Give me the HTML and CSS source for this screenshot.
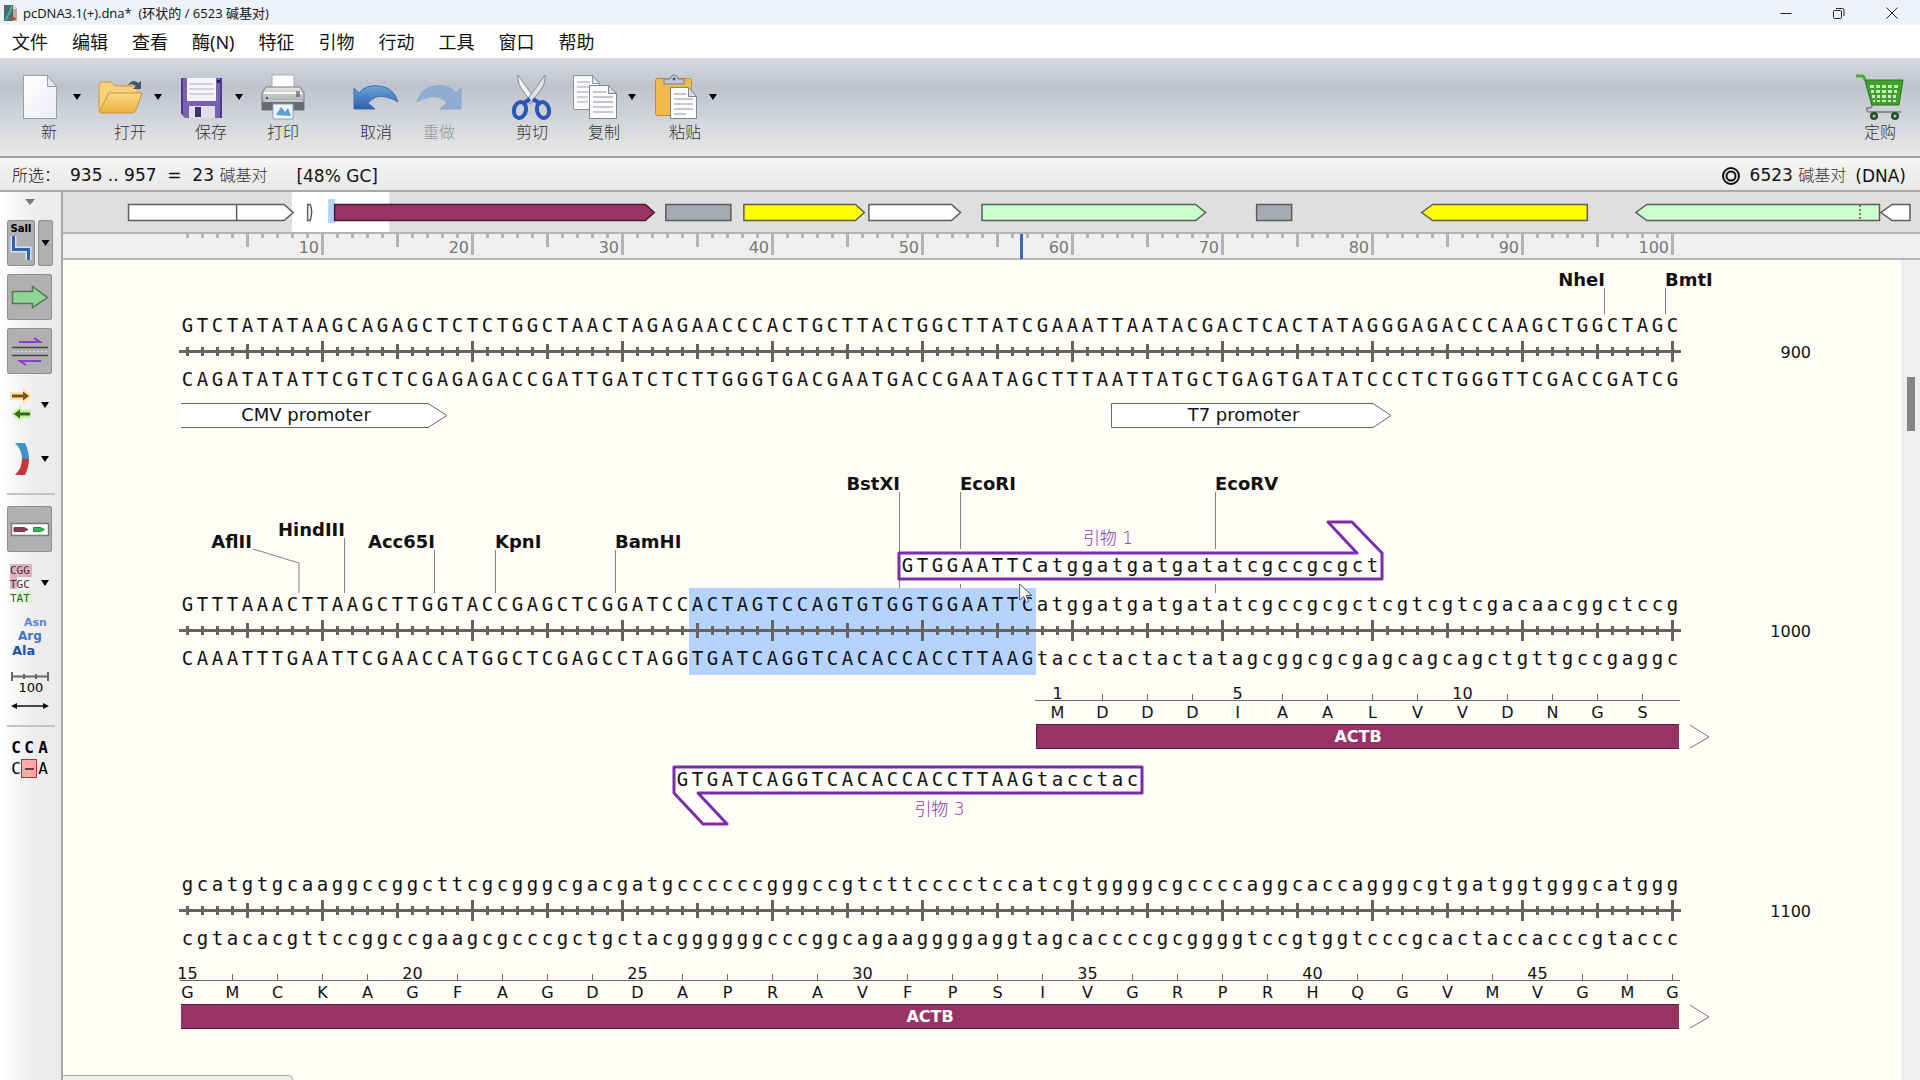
FILE: index.html
```html
<!DOCTYPE html>
<html lang="zh-CN">
<head>
<meta charset="utf-8">
<meta name="viewport" content="width=device-width, initial-scale=1">
<title>pcDNA3.1(+).dna* (环状的 / 6523 碱基对)</title>
<link rel="stylesheet" href="styles.css">
</head>
<body>
<div class="app">

  <header class="titlebar">
    <svg class="file-icon" viewBox="0 0 15 18" aria-hidden="true">
      <path d="M1 1h9l4 4v12H1z" fill="#4a6c6b"/>
      <path d="M10 1l4 4h-4z" fill="#e8d9c8"/>
      <path d="M10 5h4v12h-4z" fill="#c3aa94"/>
      <path d="M3 16C4 10 9 9 8 2" stroke="#3fb3a6" stroke-width="2" fill="none"/>
      <path d="M7 14l5-1 1 3H8z" fill="#a5562f"/>
    </svg>
    <h1 class="title">pcDNA3.1(+).dna*&nbsp; (环状的 / 6523 碱基对)</h1>
    <div class="window-controls">
      <button class="window-button" aria-label="最小化"><svg viewBox="0 0 14 14"><path d="M1.500 7.500h11"/></svg></button>
      <button class="window-button" aria-label="还原"><svg viewBox="0 0 14 14"><rect x="1.500" y="4.500" width="8" height="8" rx="1"/><path d="M4 2.500h6.500a1.500 1.500 0 0 1 1.500 1.500V10"/></svg></button>
      <button class="window-button" aria-label="关闭"><svg viewBox="0 0 14 14"><path d="M1.500 1.500l11 11M12.500 1.500l-11 11"/></svg></button>
    </div>
  </header>

  <nav class="menubar">
    <button>文件</button><button>编辑</button><button>查看</button><button>酶(N)</button><button>特征</button><button>引物</button><button>行动</button><button>工具</button><button>窗口</button><button>帮助</button>
  </nav>

  <div class="toolbar">
    <button class="tool">
      <span class="tool-face"><svg class="tool-icon" viewBox="0 0 56 48"><defs><linearGradient id="paper" x1="0" y1="0" x2="1" y2="1"><stop offset="0" stop-color="#fff"/><stop offset="1" stop-color="#eceef3"/></linearGradient></defs><path d="M11.500 2.500h24l9 11v32h-33z" fill="url(#paper)" stroke="#9a9fa8"/><path d="M35.500 2.500v11h9z" fill="#e3e6ec" stroke="#9a9fa8"/></svg><span class="caret"></span></span>
      <span class="tool-label">新</span>
    </button>
    <button class="tool">
      <span class="tool-face"><svg class="tool-icon" viewBox="0 0 56 48"><defs><linearGradient id="folder" x1="0" y1="0" x2="0" y2="1"><stop offset="0" stop-color="#fbd983"/><stop offset="1" stop-color="#e9b23f"/></linearGradient></defs><path d="M6 12q0-3 3-3h9l4 4h19q3 0 3 3v18L9 40q-3 0-3-3z" fill="#f6d27c" stroke="#d09a35"/><path d="M16 20h33L43 37q-1 3-4 3H8q-2 0-1-3z" fill="url(#folder)" stroke="#cc9430"/><path d="M35 12q5-7 10-2l3-2v8h-8l3-3q-3-3-8-1z" fill="#42536c"/></svg><span class="caret"></span></span>
      <span class="tool-label">打开</span>
    </button>
    <button class="tool">
      <span class="tool-face"><svg class="tool-icon" viewBox="0 0 56 48"><path d="M7 5h41v40H11l-4-4z" fill="#7b5fb0"/><path d="M7 5h2v36l-2-1zM46 5h2v40h-2z" fill="#4f3b86"/><rect x="13" y="5" width="29" height="23" fill="#f4f5f7"/><path d="M15 11h25M15 16h25M15 21h25" stroke="#a9adb5"/><rect x="43" y="7" width="3" height="3" fill="#2d2450"/><rect x="15" y="33" width="26" height="12" rx="1" fill="#dfe0e8"/><rect x="21" y="34" width="6" height="10" fill="#413073"/></svg><span class="caret"></span></span>
      <span class="tool-label">保存</span>
    </button>
    <button class="tool">
      <span class="tool-face"><svg class="tool-icon" viewBox="0 0 56 48"><defs><linearGradient id="printer" x1="0" y1="0" x2="0" y2="1"><stop offset="0" stop-color="#e4e4e4"/><stop offset="1" stop-color="#8d8f93"/></linearGradient></defs><path d="M17 2h22v16H17z" fill="#fff" stroke="#a6abb5"/><path d="M11 14h34l4 6v17H7V20z" fill="url(#printer)" stroke="#77797d"/><path d="M9 20h38" stroke="#f6f6f6" stroke-width="2"/><path d="M7 29h42v8H7z" fill="#686b70"/><path d="M9 29h38v-2H9z" fill="#c4c5c8"/><circle cx="12" cy="25" r="1" fill="#222"/><path d="M44 18v6M42 18v6" stroke="#333"/><path d="M18 31h20v15H18z" fill="#eef5fc" stroke="#8aa2bf"/><path d="M21 42l5-8 4 5 3-4 3 8z" fill="#5a9fd8"/></svg></span>
      <span class="tool-label">打印</span>
    </button>
    <span class="tool-gap"></span>
    <button class="tool">
      <span class="tool-face"><svg class="tool-icon" viewBox="0 0 56 48"><defs><linearGradient id="arrow" x1="0" y1="0" x2="0" y2="1"><stop offset="0" stop-color="#6fa3dc"/><stop offset="1" stop-color="#2a62ad"/></linearGradient></defs><path d="M6 15v21h21l-7-6q8-9 18-6 8 2 12 5Q46 15 32 13 18 11 11 20z" fill="url(#arrow)" stroke="#3f70b0"/></svg></span>
      <span class="tool-label">取消</span>
    </button>
    <button class="tool" disabled>
      <span class="tool-face"><svg class="tool-icon" viewBox="0 0 56 48"><path d="M50 15v21H29l7-6q-8-9-18-6-8 2-12 5Q10 15 24 13q14-2 21 7z" fill="#8fadd3" stroke="#8aa7cc"/></svg></span>
      <span class="tool-label">重做</span>
    </button>
    <span class="tool-gap"></span>
    <button class="tool">
      <span class="tool-face"><svg class="tool-icon" viewBox="0 0 56 48"><path d="M14 2q-1 8 5 16l9 12 3-4z" fill="#f2f3f5" stroke="#858b95"/><path d="M41 2q1 8-5 16L26 31l-3-4z" fill="#dfe2e7" stroke="#858b95"/><g fill="none" stroke="#2a56b8" stroke-width="4"><ellipse cx="16" cy="37" rx="6" ry="8" transform="rotate(14 16 37)"/><ellipse cx="39" cy="37" rx="6" ry="8" transform="rotate(-14 39 37)"/><path d="M20 30l6-4M35 30l-6-4"/></g></svg></span>
      <span class="tool-label">剪切</span>
    </button>
    <button class="tool">
      <span class="tool-face"><svg class="tool-icon" viewBox="0 0 56 48"><g fill="#fbfbfc" stroke="#8f949d"><path d="M6.500 2.500h19l7 8v26h-26z"/><path d="M25.500 2.500v8h7z" fill="#e1e4ea"/></g><path d="M10 9h13M10 14h13M10 19h13M10 24h11M10 29h11" stroke="#9da3ae"/><g fill="#fbfbfc" stroke="#7f848d"><path d="M22.500 12.500h19l8 8v25h-27z"/><path d="M41.500 12.500v8h8z" fill="#d9dde4"/></g><path d="M26 19h13M26 24h20M26 29h20M26 34h20M26 39h20" stroke="#8e949f"/></svg><span class="caret"></span></span>
      <span class="tool-label">复制</span>
    </button>
    <button class="tool">
      <span class="tool-face"><svg class="tool-icon" viewBox="0 0 56 48"><rect x="7.500" y="5.500" width="36" height="37" rx="2" fill="#f2b94c" stroke="#c68b2b"/><path d="M16 11V6h6q1-4 4-4t4 4h6v5z" fill="#c3c8d0" stroke="#777d88"/><circle cx="26" cy="6" r="1.500" fill="#50565f"/><g fill="#fbfbfc" stroke="#7f848d"><path d="M22.500 14.500h18l8 9v22h-26z"/><path d="M40.500 14.500v9h8z" fill="#d9dde4"/></g><path d="M26 21h12M26 26h19M26 31h19M26 36h19M26 41h12" stroke="#8e949f"/></svg><span class="caret"></span></span>
      <span class="tool-label">粘贴</span>
    </button>
    <button class="tool tool-end">
      <span class="tool-face"><svg class="tool-icon" viewBox="0 0 56 48"><path d="M4 3h6q2 0 3 3l7 26q0 3-3 3h-2q-1 4 3 4h31" fill="none" stroke="#8b8f94" stroke-width="2"/><path d="M4 3h6q2 0 3 4" fill="none" stroke="#4bae35" stroke-width="3"/><path d="M13 7h38l-4 25H20z" fill="#3fa02c" stroke="#2c7d1e"/><g fill="#c8ecbf"><path d="M18 12h4v3h-4zM24 12h4v3h-4zM30 12h4v3h-4zM36 12h4v3h-4zM42 12h4v3h-4zM19 17h3v3h-3zM24 17h4v3h-4zM30 17h4v3h-4zM36 17h4v3h-4zM42 17h3v3h-3zM20 22h3v3h-3zM25 22h3v3h-3zM30 22h4v3h-4zM36 22h3v3h-3zM41 22h3v3h-3zM21 27h2v2h-2zM25 27h3v2h-3zM30 27h4v2h-4zM36 27h3v2h-3zM41 27h3v2h-3z"/></g><circle cx="22" cy="43" r="4" fill="#27502a"/><circle cx="43" cy="43" r="4" fill="#27502a"/><circle cx="22" cy="43" r="1.500" fill="#b5c7b5"/><circle cx="43" cy="43" r="1.500" fill="#b5c7b5"/></svg></span>
      <span class="tool-label">定购</span>
    </button>
  </div>

  <div class="statusbar">
    <span class="status-name">所选：</span>
    <span class="status-range">935 .. 957&nbsp; =&nbsp; 23 <span class="han">碱基对</span></span>
    <span>[48% GC]</span>
    <span class="status-total">
      <svg class="ring" viewBox="0 0 20 20" aria-hidden="true"><circle cx="10" cy="10" r="8"/><circle cx="10" cy="10" r="4.500"/></svg>
      <span>6523 <span class="han">碱基对</span></span>
      <span>(DNA)</span>
    </span>
  </div>

  <div class="workspace">
    <aside class="sidebar">
      <button class="side-collapse" aria-label="折叠"><svg viewBox="0 0 10 6"><path d="M0 0h10L5 6z" fill="#777"/></svg></button>
      <div class="side-split">
        <button class="side-button pressed" aria-label="酶切位点"><svg viewBox="0 0 28 46"><text x="14" y="12" class="icon-sal">SalI</text><path d="M6.500 16v13.500h15V40" fill="none" stroke="#d5e4fb" stroke-width="6"/><path d="M6.500 16v13.500h15V40" fill="none" stroke="#3560ad" stroke-width="3"/></svg></button>
        <button class="side-button pressed" aria-label="酶选项"><span class="caret"></span></button>
      </div>
      <button class="side-button pressed" aria-label="特征"><svg viewBox="0 0 46 46"><path d="M5.500 17.500h20v-5L40.500 23.500 25.500 33.500v-4h-20z" fill="#8fd694" stroke="#587060" stroke-width="1.500"/></svg></button>
      <button class="side-button pressed" aria-label="引物"><svg viewBox="0 0 46 46"><path d="M12 14h21l-6-4" fill="none" stroke="#8b3ec9" stroke-width="2"/><path d="M5 19.500h36M5 27.500h36" stroke="#444" stroke-width="1.500"/><path d="M6 23.500h35" stroke="#d8d8d8" stroke-dasharray="2 2"/><path d="M34 33H13l6 4" fill="none" stroke="#8b3ec9" stroke-width="2"/></svg></button>
      <button class="side-button" aria-label="ORF"><svg viewBox="0 0 28 46"><path d="M3 10h13V5l9 9-9 9v-5H3z" fill="#fae2ad"/><path d="M5 12.500h11v-3l6 4.500-6 4.500v-3H5z" fill="#7c5115"/><path d="M24 28H14v-4l-10 8 10 8v-4h10z" fill="#bdf59c"/><path d="M23 30.500H13v-3L7 32l6 4.500v-3h10z" fill="#376b1d"/></svg><span class="caret"></span></button>
      <button class="side-button" aria-label="密度"><svg viewBox="0 0 28 46"><path d="M8 7h10q4 8 4 16h-7Q15 14 8 7z" fill="#3d92c8"/><path d="M22 23q0 8-4 16H8q7-7 7-16z" fill="#c5373b"/></svg><span class="caret"></span></button>
      <hr class="side-rule">
      <button class="side-button pressed" aria-label="小地图"><svg viewBox="0 0 46 46"><rect x="4.500" y="17.500" width="37" height="12" fill="#fff" stroke="#777" stroke-width="1.500"/><path d="M7 21.500h10l4 2-4 2H7z" fill="#8a3560" stroke="#6b3a56"/><path d="M26.500 21.500h7l4 2-4 2h-7z" fill="#37b954" stroke="#2d7c3d"/></svg></button>
      <button class="side-button" aria-label="颜色"><svg viewBox="0 0 28 46"><path d="M3 4h22v13H10v12H3z" fill="#dcb2c2"/><path d="M10 31h15v12H10z" fill="#d9f5d2"/><g class="icon-codon"><text x="3" y="14">CGG</text><text x="3" y="28">TGC</text><text x="3" y="42" fill="#29632a">TAT</text></g></svg><span class="caret"></span></button>
      <button class="side-button" aria-label="翻译"><svg viewBox="0 0 46 46"><g class="icon-amino"><text x="17" y="12" font-size="11" fill="#5b86cd">Asn</text><text x="11" y="26" font-size="12" fill="#4571c0">Arg</text><text x="5" y="41" font-size="13" fill="#2650a8">Ala</text></g></svg></button>
      <button class="side-button" aria-label="编号"><svg viewBox="0 0 46 46"><path d="M4 8.500h38M5 4v9M41 4v9" stroke="#666" stroke-width="2"/><path d="M17 6v5M29 6v5" stroke="#666" stroke-width="2"/><text x="24" y="24" class="icon-hundred">100</text><path d="M6 38h34" stroke="#111" stroke-width="1.500"/><path d="M4 38l6-3v6zM42 38l-6-3v6z" fill="#111"/></svg></button>
      <hr class="side-rule">
      <button class="side-button" aria-label="比对"><svg viewBox="0 0 46 46"><rect x="14.500" y="21.500" width="15" height="18" fill="#fdaaaa" stroke="#bf2b2b"/><g class="icon-align"><text x="9" y="15" font-weight="700">C</text><text x="22" y="15" font-weight="700">C</text><text x="36" y="15" font-weight="700">A</text><text x="9" y="36">C</text><text x="36" y="36">A</text></g><path d="M18 31h9" stroke="#222" stroke-width="1.500"/></svg></button>
    </aside>

    <main class="viewer">
      <div class="overview">
        <svg class="overview-map" viewBox="0 0 1856 40" preserveAspectRatio="none" aria-label="质粒概览">
          <rect x="229" y="0" width="97" height="40" fill="#fff"/>
          <rect x="265" y="7" width="7" height="24" fill="#b4d2f6"/>
          <g stroke="#5c5c5c" stroke-width="1.500">
            <path d="M65.500 12.500H221l9 8-9 8H65.500zM173.500 12.500v16" fill="#fff"/>
            <path d="M244.500 12.500h2.500q3 7 0 16h-2.500z" fill="#fff"/>
            <path d="M271.500 12.500H582l9 8-9 8H271.500z" fill="#993366" stroke="#4a1733"/>
            <path d="M602.500 12.500h65v16h-65zM1193 12.500h35v16h-35z" fill="#a6aab3"/>
            <path d="M680.500 12.500H792l9 8-9 8H680.500z" fill="#ff0"/>
            <path d="M805.500 12.500H888l9 8-9 8H805.500z" fill="#fff"/>
            <path d="M918.500 12.500H1132l10 8-10 8H918.500z" fill="#ccffcc"/>
            <path d="M1523.500 12.500H1369l-11 8 11 8H1523.500z" fill="#ff0"/>
            <path d="M1815.500 12.500H1583l-11 8 11 8H1815.500z" fill="#ccffcc"/>
            <path d="M1846 12.500H1828l-11 8 11 8H1846z" fill="#fff"/>
            <path d="M1796 13v15" stroke-dasharray="2 2"/>
          </g>
        </svg>
      </div>

      <div class="ruler">
        <div class="ruler-scale">
          <span>10</span><span>20</span><span>30</span><span>40</span><span>50</span><span>60</span><span>70</span><span>80</span><span>90</span><span>100</span>
          <i class="ruler-caret"></i>
        </div>
      </div>

      <div class="canvas">
        <div class="sequence">

          <section class="block">
            <div class="sites">
              <div class="site before" style="--cut:95"><b>NheI</b></div>
              <div class="site" style="--cut:99"><b>BmtI</b></div>
            </div>
            <div class="duplex">
              <p class="strand" data-pair="1">GTCTATATAAGCAGAGCTCTCTGGCTAACTAGAGAACCCACTGCTTACTGGCTTATCGAAATTAATACGACTCACTATAGGGAGACCCAAGCTGGCTAGC</p>
              <span class="position">900</span>
            </div>
            <div class="features">
              <div class="feature" style="--start:1;--span:18">
                <svg viewBox="0 0 270 25"><path d="M1 .5H248l19 12-19 12H1" fill="#fff" stroke="#666"/></svg>
                <span class="feature-label arrowed">CMV promoter</span>
              </div>
              <div class="feature" style="--start:63;--span:19">
                <svg viewBox="0 0 285 25"><path d="M1.500 .5H263l18 12-18 12H1.500z" fill="#fff" stroke="#666"/></svg>
                <span class="feature-label arrowed">T7 promoter</span>
              </div>
            </div>
          </section>

          <section class="block">
            <div class="sites tall">
              <div class="site bent" style="--cut:8"><b>AflII</b><svg viewBox="0 0 48 45"><path d="M1 1l46 14v30"/></svg></div>
              <div class="site before raised" style="--cut:11"><b>HindIII</b></div>
              <div class="site before low" style="--cut:17"><b>Acc65I</b></div>
              <div class="site low" style="--cut:21"><b>KpnI</b></div>
              <div class="site low" style="--cut:29"><b>BamHI</b></div>
              <div class="site before high" style="--cut:48"><b>BstXI</b></div>
              <div class="site high" style="--cut:52"><b>EcoRI</b></div>
              <div class="site high" style="--cut:69"><b>EcoRV</b></div>
              <div class="primer forward" style="--start:49;--span:32">
                <span class="primer-name">引物 1</span>
                <div class="primer-body">
                  <svg viewBox="0 0 480 35"><path d="M-1 4H457L428-27h24l30 31v26H-1z"/></svg>
                  <p class="bases">GTGGAATTCatggatgatgatatcgccgcgct</p>
                </div>
              </div>
            </div>
            <div class="duplex">
              <div class="selection" style="--start:35;--span:23"></div>
              <p class="strand" data-pair="1">GTTTAAACTTAAGCTTGGTACCGAGCTCGGATCCACTAGTCCAGTGTGGTGGAATTCatggatgatgatatcgccgcgctcgtcgtcgacaacggctccg</p>
              <span class="position">1000</span>
              <svg class="pointer" viewBox="0 0 14 21" aria-hidden="true"><path d="M.7 1v16l4-3.500 2.500 6 2.500-1-2.500-6h5.500z" fill="#fff" stroke="#4b5368"/></svg>
            </div>
            <div class="translation" style="--start:58;--span:43">
              <p class="residues" data-number="1" data-lead="0">MDDDIAALVVDNGS</p>
              <div class="cds first"><span>ACTB</span></div>
              <svg class="continues" viewBox="0 0 20 25"><path d="M0 1l19 12L0 24"/></svg>
            </div>
            <div class="primers-below">
              <div class="primer reverse" style="--start:34;--span:31">
                <div class="primer-body">
                  <svg viewBox="0 0 465 35"><path d="M-1 4H467v26H23l29 31H28L-1 30z"/></svg>
                  <p class="bases">GTGATCAGGTCACACCACCTTAAGtacctac</p>
                </div>
                <span class="primer-name">引物 3</span>
              </div>
            </div>
          </section>

          <section class="block">
            <div class="duplex">
              <p class="strand" data-pair="1">gcatgtgcaaggccggcttcgcgggcgacgatgccccccgggccgtcttcccctccatcgtggggcgccccaggcaccagggcgtgatggtgggcatggg</p>
              <span class="position">1100</span>
            </div>
            <div class="translation" style="--start:1;--span:100">
              <p class="residues" data-number="15" data-lead="-1">GMCKAGFAGDDAPRAVFPSIVGRPRHQGVMVGMG</p>
              <div class="cds"><span>ACTB</span></div>
              <svg class="continues" viewBox="0 0 20 25"><path d="M0 1l19 12L0 24"/></svg>
            </div>
          </section>

        </div>
        <div class="scrollbar"><div class="scroll-thumb"></div></div>
        <div class="bottom-tab"></div>
      </div>
    </main>
  </div>
</div>
<script src="app.js"></script>
</body>
</html>
```
FILE: styles.css
```css
:root {
  --base: 15px;
  --paper: #fffdf6;
  --line: #a8a8a8;
  --axis: #66635e;
  --ui: "DejaVu Sans", "Noto Sans CJK SC", sans-serif;
  --mono: "DejaVu Sans Mono", monospace;
}

* { box-sizing: border-box; }

body {
  margin: 0;
  font: 16px/20px var(--ui);
  color: #111;
  overflow: hidden;
}

p, h1 { margin: 0; font-weight: 400; }

svg { display: block; overflow: visible; }

button {
  padding: 0;
  border: 0;
  background: none;
  color: inherit;
  font: inherit;
}

.app {
  display: flex;
  flex-direction: column;
  height: 100vh;
}

/* Title bar and menu */

.titlebar {
  display: flex;
  align-items: center;
  gap: 5px;
  height: 25px;
  padding: 0 2px 0 3px;
  background: #eef2f9;
}

.file-icon { width: 15px; height: 18px; }

.title {
  font: 13px/20px "Open Sans", "Noto Sans CJK SC", sans-serif;
}

.window-controls { display: flex; margin-left: auto; }

.window-button {
  display: grid;
  place-items: center;
  width: 53px;
  height: 25px;
}

.window-button svg {
  width: 14px;
  height: 14px;
  fill: none;
  stroke: #222;
}

.menubar {
  display: flex;
  gap: 24px;
  height: 33px;
  padding-left: 12px;
  background: #fff;
  font: 18px/34px "Noto Sans", "Noto Sans CJK SC", sans-serif;
}

/* Toolbar */

.toolbar {
  display: flex;
  gap: 7px;
  height: 100px;
  padding: 15px 12px 0 12px;
  border-bottom: 2px solid #a2a2a2;
  background: linear-gradient(#d9dbe0, #bdc3cd 28px, #d2d5da 62px, #e9e9e9 98px);
}

.tool {
  display: flex;
  flex-direction: column;
  align-items: center;
  align-self: flex-start;
}

.tool-face { display: flex; align-items: center; }

.tool-icon { width: 56px; height: 48px; }

.tool-face .caret { margin: 0 5px; }

.tool-label {
  font-weight: 300;
  line-height: 24px;
  color: #333;
}

.tool:disabled .tool-label { color: #999; }

.tool-gap { width: 23px; }

.tool-end { margin-left: auto; }

.caret {
  flex: none;
  width: 8px;
  height: 6px;
  background: #000;
  clip-path: polygon(0 0, 100% 0, 50% 100%);
}

/* Status bar */

.statusbar {
  display: flex;
  align-items: center;
  height: 34px;
  padding: 3px 14px 0 12px;
  border-bottom: 2px solid var(--line);
  background: linear-gradient(#f5f5f5, #e9e9e9);
  font-size: 17px;
}

.status-name { width: 58px; font-size: 16px; font-weight: 300; white-space: nowrap; }

.status-range { margin-right: 29px; }

.han { font-size: 16px; font-weight: 300; color: #333; }

.status-total {
  display: flex;
  align-items: center;
  gap: 9px;
  margin-left: auto;
}

.ring { width: 20px; height: 20px; fill: none; stroke: #111; stroke-width: 2; }

/* Side palette */

.workspace { display: flex; flex: 1; min-height: 0; }

.sidebar {
  display: flex;
  flex-direction: column;
  gap: 8px;
  flex: none;
  width: 63px;
  padding: 0 9px 0 7px;
  border-right: 2px solid var(--line);
  background: linear-gradient(90deg, #fff, #ececec 36px);
}

.side-collapse {
  display: grid;
  place-items: center;
  height: 20px;
}

.side-collapse svg { width: 10px; height: 6px; }

.side-split { display: grid; grid-template-columns: 28px 15px; gap: 3px; }

.side-button {
  display: flex;
  align-items: center;
  flex: none;
  height: 46px;
}

.side-button svg { height: 46px; flex: none; }

.side-button .caret { margin-left: 6px; }

.side-split .caret { margin: 0 auto; }

.pressed {
  border-radius: 3px;
  background: #b0b0b0;
  box-shadow: inset 0 0 0 1px #8f8f8f;
}

.side-rule {
  width: 48px;
  margin: 3px 0;
  border: 0;
  border-top: 2px solid #c4c4c4;
}

.icon-sal { font: 700 10px var(--ui); text-anchor: middle; }
.icon-codon { font: 11px var(--mono); fill: #4a2c3a; }
.icon-amino { font-family: var(--ui); font-weight: 700; }
.icon-hundred { font: 13px var(--ui); text-anchor: middle; }
.icon-align { font-size: 16px; font-family: var(--mono); text-anchor: middle; }

/* Overview strip and ruler */

.viewer {
  display: flex;
  flex-direction: column;
  flex: 1;
  min-width: 0;
}

.overview {
  height: 42px;
  border-bottom: 2px solid #b4b4b4;
  background: #dfdfdf;
}

.overview-map { width: 100%; height: 40px; }

.ruler {
  height: 26px;
  padding-left: 117px;
  border-bottom: 2px solid #b4b4b4;
  background: #efefef;
}

.ruler-scale {
  display: grid;
  grid-template-columns: repeat(10, calc(var(--base) * 10));
  position: relative;
  width: calc(var(--base) * 100);
  height: 24px;
  background:
    linear-gradient(90deg, transparent 6px, #b4b4b4 6px, #b4b4b4 9px, transparent 9px) 0 0 / 15px 4px repeat-x,
    linear-gradient(90deg, transparent 66px, #b4b4b4 66px, #b4b4b4 69px, transparent 69px) 0 0 / 75px 13px repeat-x,
    linear-gradient(90deg, transparent 141px, #b4b4b4 141px, #b4b4b4 144px, transparent 144px) 0 0 / 150px 21px repeat-x;
}

.ruler-scale span {
  padding: 4px 11px 0 0;
  text-align: right;
  line-height: 20px;
  color: #777;
}

.ruler-caret {
  position: absolute;
  left: 840px;
  top: 0;
  width: 3px;
  height: 25px;
  background: #3f69b2;
}

/* Sequence canvas */

.canvas {
  display: flex;
  justify-content: space-between;
  position: relative;
  flex: 1;
  min-height: 0;
  overflow: hidden;
  background: var(--paper);
}

.sequence {
  display: flex;
  flex-direction: column;
  gap: 48px;
  padding-left: 117px;
}

.sites, .duplex, .features, .translation, .primers-below {
  display: grid;
  grid-template-columns: repeat(100, var(--base));
}

.sites { height: 49px; }
.sites.tall { height: 112px; }

.site {
  grid-row: 1;
  grid-column: calc(var(--cut) + 1) / -1;
  justify-self: start;
  align-self: end;
  display: flex;
  flex-direction: column;
  height: 42px;
  margin-bottom: -5px;
  font-size: 18px;
  line-height: 16px;
  white-space: nowrap;
}

.site::after {
  content: "";
  flex: 1;
  width: 1px;
  background: #85837f;
}

.site.before {
  grid-column: 1 / calc(var(--cut) + 1);
  justify-self: end;
  align-items: flex-end;
}

.site.low { height: 59px; }
.site.raised { height: 71px; }
.site.high { height: 117px; }

.site.bent {
  grid-column: 1 / calc(var(--cut) + 1);
  justify-self: end;
  flex-direction: row;
  height: 59px;
}

.site.bent::after { content: none; }

.site.bent svg {
  align-self: flex-end;
  width: 48px;
  height: 45px;
  fill: none;
  stroke: #85837f;
}

.duplex {
  grid-template-columns: repeat(100, var(--base)) 131px;
  grid-template-rows: 32px 21px 34px;
  position: relative;
}

.strand {
  display: grid;
  grid-template-columns: subgrid;
  grid-row: 1;
  grid-column: 1 / 101;
  font: 19px/32px var(--mono);
  text-align: center;
}

.strand.complement { grid-row: 3; line-height: 34px; }

.axis {
  grid-row: 2;
  grid-column: 1 / 101;
  margin: 0 -1px;
  padding: 0 1px;
  background:
    linear-gradient(var(--axis), var(--axis)) 0 50% / 100% 3px no-repeat border-box,
    linear-gradient(90deg, transparent 6px, var(--axis) 6px, var(--axis) 9px, transparent 9px) 0 50% / 15px 9px repeat-x content-box,
    linear-gradient(90deg, transparent 66px, var(--axis) 66px, var(--axis) 69px, transparent 69px) 0 50% / 75px 15px repeat-x content-box,
    linear-gradient(90deg, transparent 141px, var(--axis) 141px, var(--axis) 144px, transparent 144px) 0 50% / 150px 21px repeat-x content-box;
}

.position {
  grid-row: 2;
  grid-column: 101;
  justify-self: end;
  line-height: 23px;
}

.selection {
  grid-row: 1 / 4;
  grid-column: var(--start) / span var(--span);
  margin: 0 -1px;
  background: #b5d3ff;
}

.pointer {
  position: absolute;
  left: 839px;
  top: -5px;
  width: 14px;
  height: 21px;
}

/* Annotations */

.features { padding-top: 7px; }

.feature {
  display: grid;
  grid-column: var(--start) / span var(--span);
}

.feature > * { grid-area: 1 / 1; }

.feature svg { width: 100%; height: 25px; }

.feature-label { font-size: 18px; line-height: 24px; text-align: center; }

.arrowed { padding-right: 18px; }

.translation { padding-top: 9px; }

.residues {
  display: grid;
  grid-template-columns: subgrid;
  grid-template-rows: 17px 23px;
  grid-column: var(--start) / span var(--span);
  background: linear-gradient(#6f6d69, #6f6d69) 0 16px / 100% 1px no-repeat;
  text-align: center;
  line-height: 23px;
}

.codon-number {
  grid-row: 1;
  justify-self: center;
  line-height: 20px;
}

.codon-tick {
  grid-row: 1;
  justify-self: center;
  align-self: end;
  width: 1px;
  height: 7px;
  background: #6f6d69;
}

.residue { grid-row: 2; }

.cds {
  grid-row: 2;
  grid-column: var(--start) / span var(--span);
  height: 25px;
  margin: 0 1px;
  border: solid #552038;
  border-width: 1px 0;
  background: #993366;
  color: #fff;
  font-weight: 700;
  line-height: 23px;
  text-align: center;
}

.cds.first { border-left-width: 1px; }

.continues {
  grid-row: 2;
  grid-column: 100;
  margin-left: 25px;
  width: 20px;
  height: 25px;
  fill: none;
  stroke: #777;
}

.primers-below { padding-top: 14px; }

.primer {
  display: flex;
  flex-direction: column;
  grid-row: 1;
  grid-column: var(--start) / span var(--span);
  text-align: center;
}

.primer.forward { align-self: end; margin-bottom: 4px; z-index: 1; }

.primer-name {
  font-size: 17px;
  font-weight: 300;
  line-height: 22px;
  color: #7d35a8;
}

.forward .primer-name { padding-right: 64px; }
.reverse .primer-name { padding-left: 64px; }

.primer-body {
  display: grid;
  height: 35px;
  background: var(--paper);
}

.primer-body > * { grid-area: 1 / 1; }

.primer-body svg {
  width: 100%;
  height: 35px;
  fill: #fffefb;
  stroke: #7c2cac;
  stroke-width: 3;
  stroke-linejoin: round;
}

.bases {
  display: grid;
  grid-template-columns: repeat(auto-fill, var(--base));
  font: 19px/32px var(--mono);
  text-align: center;
  z-index: 1;
}

/* Scroll bar and bottom tab */

.scrollbar {
  width: 19px;
  padding: 117px 5px 0 6px;
  background: #efefef;
}

.scroll-thumb { height: 54px; background: #858585; }

.bottom-tab {
  position: absolute;
  left: 0;
  bottom: 0;
  width: 230px;
  height: 5px;
  border: solid #a8a8a8;
  border-width: 1px 1px 0 0;
  border-radius: 0 8px 0 0;
  background: #ededed;
}
```
FILE: app.js
```js
const PAIRS = { A: "T", T: "A", C: "G", G: "C", a: "t", t: "a", c: "g", g: "c" };

// One cell per base keeps every letter on the 15px pitch.
function fillCells(element, text) {
  element.replaceChildren(...[...text].map((letter) => {
    const cell = document.createElement("span");
    cell.textContent = letter;
    return cell;
  }));
}

document.querySelectorAll(".strand").forEach((strand) => {
  const bases = strand.textContent.trim();
  const axis = document.createElement("div");
  const complement = document.createElement("p");
  axis.className = "axis";
  complement.className = "strand complement";
  fillCells(strand, bases);
  fillCells(complement, [...bases].map((base) => PAIRS[base]).join(""));
  strand.after(axis, complement);
});

document.querySelectorAll(".bases").forEach((row) => fillCells(row, row.textContent.trim()));

// Each residue sits under the middle base of its codon.
document.querySelectorAll(".residues").forEach((row) => {
  const letters = [...row.textContent.trim()];
  const first = Number(row.dataset.number);
  const lead = Number(row.dataset.lead);
  row.replaceChildren();
  letters.forEach((letter, index) => {
    const column = 2 + lead + index * 3;
    const number = first + index;
    const mark = document.createElement("span");
    const numbered = number === 1 || number % 5 === 0;
    mark.className = numbered ? "codon-number" : "codon-tick";
    if (numbered) mark.textContent = number;
    mark.style.gridColumn = column;
    const residue = document.createElement("span");
    residue.className = "residue";
    residue.textContent = letter;
    residue.style.gridColumn = column;
    row.append(mark, residue);
  });
});
```
